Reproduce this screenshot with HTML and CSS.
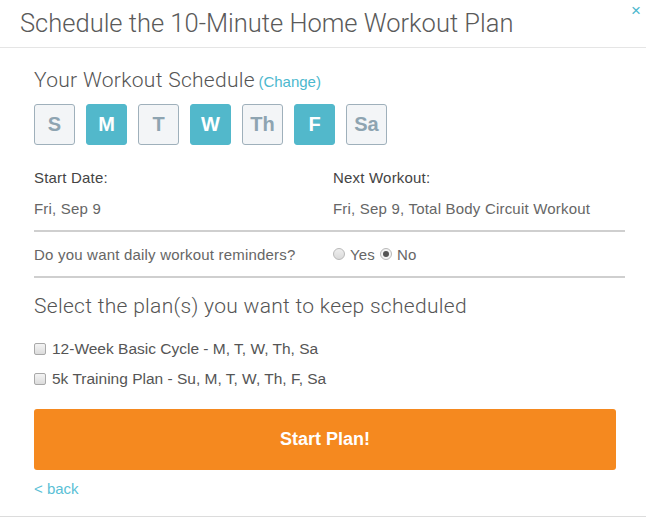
FILE: index.html
```html
<!DOCTYPE html>
<html>
<head>
<meta charset="utf-8">
<link rel="stylesheet" href="styles.css">
</head>
<body>
<div class="modal">
  <div class="modal-header">
    <h1 class="title">Schedule the 10-Minute Home Workout Plan</h1>
    <span class="close">×</span>
  </div>
  <div class="modal-body">
    <h2 class="section-title">Your Workout Schedule <a class="change">(Change)</a></h2>
    <div class="days">
      <div class="day">S</div>
      <div class="day on">M</div>
      <div class="day">T</div>
      <div class="day on">W</div>
      <div class="day">Th</div>
      <div class="day on">F</div>
      <div class="day">Sa</div>
    </div>
    <div class="info">
      <div class="col">
        <div class="label">Start Date:</div>
        <div class="value">Fri, Sep 9</div>
      </div>
      <div class="col">
        <div class="label">Next Workout:</div>
        <div class="value">Fri, Sep 9, Total Body Circuit Workout</div>
      </div>
    </div>
    <div class="reminder">
      <div class="col">Do you want daily workout reminders?</div>
      <div class="col radios">
        <span class="radio"></span><span class="opt">Yes</span>
        <span class="radio checked"></span><span class="opt">No</span>
      </div>
    </div>
    <h2 class="section-title plans-title">Select the plan(s) you want to keep scheduled</h2>
    <div class="plan"><span class="check"></span>12-Week Basic Cycle - M, T, W, Th, Sa</div>
    <div class="plan"><span class="check"></span>5k Training Plan - Su, M, T, W, Th, F, Sa</div>
    <button class="start">Start Plan!</button>
    <a class="back">&lt; back</a>
  </div>
</div>
</body>
</html>
```
FILE: styles.css
```css
html, body {
  margin: 0;
  padding: 0;
  background: #fff;
}
body {
  font-family: "Liberation Sans", Arial, sans-serif;
  color: #555;
  width: 646px;
  height: 517px;
  overflow: hidden;
}
.modal {
  height: 516px;
  border-bottom: 1px solid #dcdcdc;
}
.modal-header {
  position: relative;
  height: 47px;
  border-bottom: 1px solid #e5e5e5;
}
.title {
  margin: 0;
  padding: 8px 0 0 20px;
  font-family: Roboto, "Liberation Sans", sans-serif;
  font-weight: 300;
  font-size: 25.5px;
  line-height: 30px;
  color: #5a5a5a;
}
.close {
  position: absolute;
  right: 5px;
  top: 2px;
  color: #4cb8ce;
  font-size: 17px;
  line-height: 18px;
}
.modal-body {
  padding: 0 21px 0 34px;
}
.section-title {
  margin: 0;
  font-family: Roboto, "Liberation Sans", sans-serif;
  font-weight: 300;
  font-size: 21px;
  letter-spacing: 0.3px;
  line-height: 24px;
  color: #555;
  padding-top: 20px;
}
.change {
  font-size: 15px;
  letter-spacing: 0;
  color: #4cb8ce;
  font-family: "Liberation Sans", Arial, sans-serif;
  font-weight: 400;
  margin-left: -2px;
}
.days {
  display: flex;
  gap: 11px;
  margin-top: 10px;
}
.day {
  width: 39px;
  height: 39px;
  border: 1px solid #9fb0bb;
  border-radius: 3px;
  background: #f3f5f7;
  color: #8ea4b1;
  font-weight: 700;
  font-size: 20px;
  display: flex;
  align-items: center;
  justify-content: center;
}
.day.on {
  background: #52b8cb;
  border-color: #52b8cb;
  color: #fff;
}
.info, .reminder {
  display: flex;
  font-size: 15px;
  letter-spacing: 0.2px;
}
.col {
  width: 299px;
  flex-shrink: 0;
}
.col + .col {
  width: auto;
  flex: 1;
}
.info {
  padding-top: 24px;
  height: 61px;
  border-bottom: 2px solid #cfcfcf;
}
.label {
  color: #444;
  line-height: 18px;
}
.value {
  color: #666;
  margin-top: 13px;
  line-height: 18px;
}
.reminder {
  height: 44px;
  align-items: center;
  border-bottom: 2px solid #cfcfcf;
  color: #666;
}
.radios {
  display: flex;
  align-items: center;
}
.radio {
  width: 10px;
  height: 10px;
  border: 1px solid #b8b8b8;
  border-radius: 50%;
  background: linear-gradient(#eee, #dadada);
  margin-right: 5px;
  position: relative;
}
.radio.checked {
  margin-left: 5px;
  background: #f4f4f4;
}
.radio.checked::after {
  content: "";
  position: absolute;
  left: 2px;
  top: 2px;
  width: 6px;
  height: 6px;
  border-radius: 50%;
  background: #555;
}
.opt {
  color: #666;
}
.plans-title {
  padding-top: 16px;
  color: #555;
}
.plan {
  display: flex;
  align-items: center;
  font-size: 15.5px;
  color: #555;
  line-height: 18px;
  margin-top: 12px;
}
.plans-title + .plan {
  margin-top: 22px;
}
.check {
  width: 10px;
  height: 10px;
  border: 1px solid #a9a9a9;
  border-radius: 2px;
  background: linear-gradient(#f4f4f4, #dcdcdc);
  margin-right: 6px;
}
.start {
  display: block;
  width: 582px;
  height: 61px;
  margin-top: 21px;
  border: none;
  border-radius: 3px;
  background: #f5891f;
  color: #fff;
  font-family: "Liberation Sans", Arial, sans-serif;
  font-weight: 700;
  font-size: 18px;
}
.back {
  display: block;
  margin-top: 10px;
  color: #5bbfd6;
  font-size: 15px;
  line-height: 18px;
}
```
